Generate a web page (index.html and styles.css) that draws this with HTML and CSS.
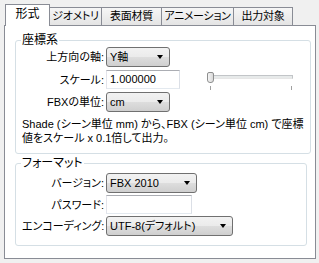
FILE: index.html
```html
<!DOCTYPE html>
<html lang="ja">
<head>
    <meta charset="UTF-8">
    <title>FBX Export</title>
    <link rel="stylesheet" href="styles.css">
</head>
<body>
    <div class="tabs">
        <div class="tab tab-active">形式</div>
        <div class="tab tab-geo">ジオメトリ</div>
        <div class="tab tab-mat">表面材質</div>
        <div class="tab tab-anim">アニメーション</div>
        <div class="tab tab-out">出力対象</div>
    </div>

    <div class="panel">
        <!-- 座標系 -->
        <fieldset class="group group-coords">
            <legend>座標系</legend>
            <div class="rows">
                <div class="row">
                    <label>上方向の軸:</label>
                    <div class="combo combo-small"><span>Y軸</span><i class="arrow"></i></div>
                </div>
                <div class="row">
                    <label>スケール:</label>
                    <div class="field field-scale">1.000000</div>
                    <div class="slider">
                        <div class="slider-track"></div>
                        <div class="slider-thumb"></div>
                        <div class="slider-tick tick-start"></div>
                        <div class="slider-tick tick-end"></div>
                    </div>
                </div>
                <div class="row">
                    <label>FBXの単位:</label>
                    <div class="combo combo-small"><span>cm</span><i class="arrow"></i></div>
                </div>
            </div>
            <p class="note">
                <span>Shade (シーン単位 mm) から、FBX (シーン単位 cm) で座標</span>
                <span>値をスケール x 0.1倍して出力。</span>
            </p>
        </fieldset>

        <!-- フォーマット -->
        <fieldset class="group group-format">
            <legend>フォーマット</legend>
            <div class="rows">
                <div class="row">
                    <label>バージョン:</label>
                    <div class="combo combo-version"><span>FBX 2010</span><i class="arrow"></i></div>
                </div>
                <div class="row">
                    <label>パスワード:</label>
                    <div class="field field-password"></div>
                </div>
                <div class="row">
                    <label>エンコーディング:</label>
                    <div class="combo combo-encoding"><span>UTF-8(デフォルト)</span><i class="arrow"></i></div>
                </div>
            </div>
        </fieldset>
    </div>
</body>
</html>
```

FILE: styles.css
```css
/* General */
body {
    margin: 0;
    background-color: #f0f0f0;
    font-family: "Liberation Sans", "Noto Sans CJK JP", sans-serif;
    font-size: 11px;
    line-height: 14px;
    color: #000;
    font-feature-settings: "palt";
}

/* Tabs */
.tabs {
    display: flex;
    align-items: flex-end;
    height: 21px;
    padding: 4px 0 0 5px;
    position: relative;
    z-index: 1;
}
.tab {
    box-sizing: border-box;
    height: 18px;
    line-height: 17px;
    text-align: center;
    font-size: 11px;
    letter-spacing: -0.3px;
    border: 1px solid #898c95;
    border-bottom: none;
    border-left: none;
    background: linear-gradient(#f6f6f6, #e4e4e4);
    white-space: nowrap;
}
.tab-active {
    width: 45px;
    height: 22px;
    line-height: 19px;
    font-size: 12px;
    letter-spacing: 0;
    margin-bottom: -1px;
    border-left: 1px solid #898c95;
    background: #fff;
}
.tab-geo { width: 52px; }
.tab-mat { width: 60px; }
.tab-anim { width: 72px; }
.tab-out { width: 59px; }

/* Panel */
.panel {
    box-sizing: border-box;
    width: 312px;
    height: 234px;
    margin-left: 4px;
    padding: 0 8px 0 10px;
    background-color: #fff;
    border: 1px solid #898c95;
}

/* Group boxes */
.group {
    margin: 0;
    padding: 0 6px 8px 6px;
    border: 1px solid #d5dfe5;
    border-radius: 3px;
}
.group legend {
    padding: 0 1px;
    margin-left: -1px;
    line-height: 12px;
    font-size: 12px;
}
.group-coords {
    margin-top: 8px;
}
.group-format {
    margin-top: 3px;
    padding-bottom: 9px;
}

.rows {
    display: flex;
    flex-direction: column;
    gap: 3px;
    margin-top: 1px;
}
.group-format .rows {
    gap: 2px;
    margin-top: 4px;
}
.row {
    display: flex;
    align-items: center;
}
.row label {
    width: 82px;
    margin-right: 2px;
    text-align: right;
    white-space: nowrap;
}

/* Combo boxes */
.combo {
    box-sizing: border-box;
    height: 20px;
    position: relative;
    padding-left: 3px;
    line-height: 18px;
    border: 1px solid #707070;
    border-radius: 3px;
    background: linear-gradient(#f2f2f2 0%, #ebebeb 48%, #dddddd 52%, #cfcfcf 100%);
    white-space: nowrap;
}
.combo .arrow {
    position: absolute;
    right: 6px;
    top: 7px;
    width: 0;
    height: 0;
    border-left: 3px solid transparent;
    border-right: 3px solid transparent;
    border-top: 4px solid #000;
}
.combo-small { width: 64px; }
.combo-version { width: 91px; }
.combo-encoding { width: 127px; }

/* Text fields */
.field {
    box-sizing: border-box;
    height: 19px;
    padding-left: 3px;
    line-height: 17px;
    background-color: #fff;
    border: 1px solid;
    border-color: #abadb3 #dbdfe6 #e3e9ef #e2e3ea;
}
.field-scale { width: 74px; }
.field-password { width: 86px; }

/* Slider */
.slider {
    position: relative;
    width: 92px;
    height: 19px;
    margin-left: 24px;
    align-self: flex-start;
}
.slider-track {
    position: absolute;
    left: 5px;
    right: 3px;
    top: 5px;
    height: 2px;
    background-color: #e7eaea;
    border: 1px solid #c2c5c8;
    border-bottom-color: #e6e6e6;
}
.slider-thumb {
    position: absolute;
    left: 3px;
    top: 2px;
    width: 5px;
    height: 9px;
    border: 1px solid #8e8f8f;
    border-radius: 2px 2px 3px 3px;
    background: linear-gradient(90deg, #f4f4f4, #d9d9d9);
}
.slider-tick {
    position: absolute;
    top: 16px;
    width: 1px;
    height: 4px;
    background-color: #a0a0a0;
}
.tick-start { left: 6px; }
.tick-end { left: 87px; }

/* Description */
.note {
    margin: 5px 0 0 0;
}
.note span {
    display: block;
    white-space: nowrap;
}
```
